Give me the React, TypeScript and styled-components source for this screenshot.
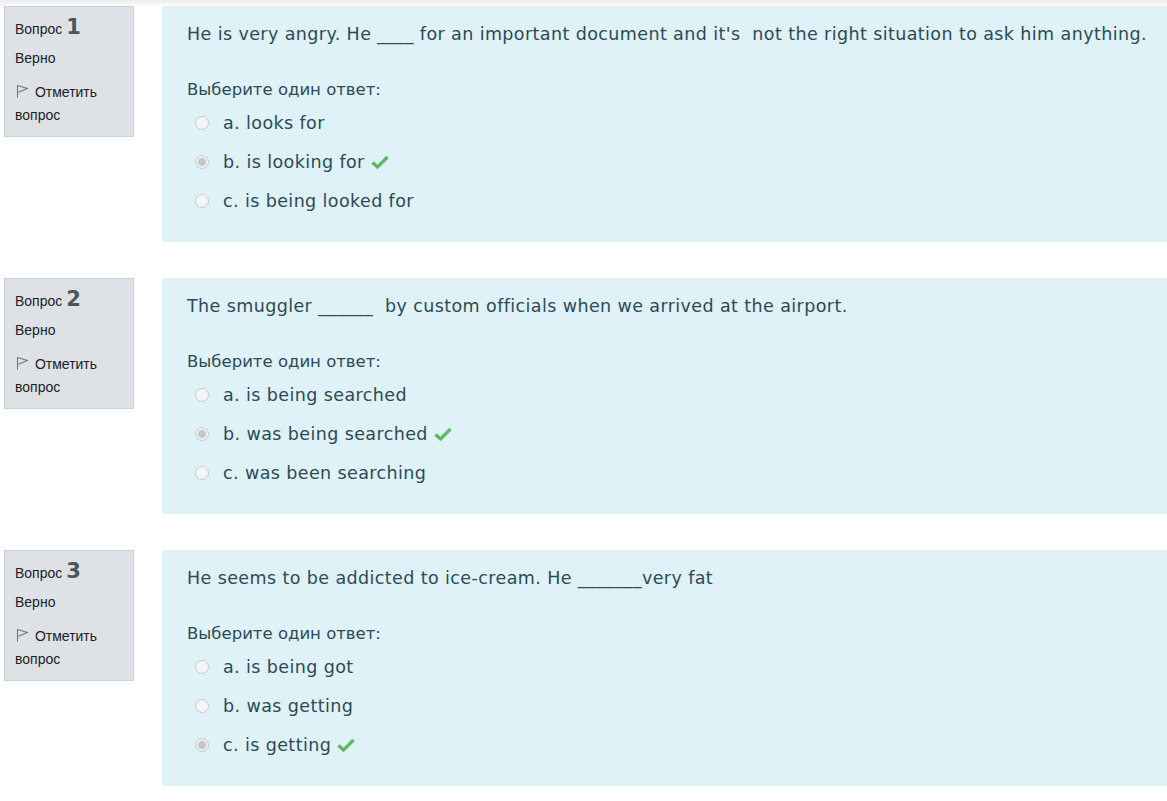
import React from 'react';
import styled, { createGlobalStyle } from 'styled-components';

const GlobalStyle = createGlobalStyle`
  html, body {
    margin: 0;
    padding: 0;
    background: #ffffff;
  }
  body {
    font-family: "Liberation Sans", Arial, sans-serif;
  }
`;

interface Option {
  label: string;
  checked?: boolean;
}

interface Question {
  num: number;
  text: string;
  options: Option[];
}

const questions: Question[] = [
  {
    num: 1,
    text: "He is very angry. He ____ for an important document and it's  not the right situation to ask him anything.",
    options: [
      { label: 'a. looks for' },
      { label: 'b. is looking for', checked: true },
      { label: 'c. is being looked for' },
    ],
  },
  {
    num: 2,
    text: 'The smuggler ______  by custom officials when we arrived at the airport.',
    options: [
      { label: 'a. is being searched' },
      { label: 'b. was being searched', checked: true },
      { label: 'c. was been searching' },
    ],
  },
  {
    num: 3,
    text: 'He seems to be addicted to ice-cream. He _______very fat',
    options: [
      { label: 'a. is being got' },
      { label: 'b. was getting' },
      { label: 'c. is getting', checked: true },
    ],
  },
];

const Flag = () => (
  <svg width="14" height="14" viewBox="0 0 14 14" fill="none">
    <path
      d="M2.5 13V1.5L12.5 4.5L4 8"
      stroke="#6a737b"
      strokeWidth="1.1"
      strokeLinejoin="round"
      strokeLinecap="round"
    />
  </svg>
);

const Check = () => (
  <svg width="18" height="14" viewBox="0 0 18 14">
    <path
      d="M1.5 7.5L6.5 12L16.5 2"
      stroke="#5cb85c"
      strokeWidth="3.2"
      fill="none"
      strokeLinejoin="miter"
    />
  </svg>
);

const App = () => {
  return (
    <>
      <GlobalStyle />
      <TopShadow />
      <Page>
        {questions.map((q) => (
          <Que key={q.num}>
            <Info>
              <QNo>
                Вопрос <Num>{q.num}</Num>
              </QNo>
              <State>Верно</State>
              <FlagLink>
                <Flag /> Отметить вопрос
              </FlagLink>
            </Info>
            <Formulation>
              <QText>{q.text}</QText>
              <Prompt>Выберите один ответ:</Prompt>
              <Answers>
                {q.options.map((o) => (
                  <Answer key={o.label}>
                    <Radio checked={o.checked} />
                    <span>{o.label}</span>
                    {o.checked && <Check />}
                  </Answer>
                ))}
              </Answers>
            </Formulation>
          </Que>
        ))}
      </Page>
    </>
  );
};

export default App;

const TopShadow = styled.div`
  position: fixed;
  top: 0;
  left: 0;
  right: 0;
  height: 6px;
  background: linear-gradient(#ececec, rgba(240, 240, 240, 0.2));
  pointer-events: none;
`;

const Page = styled.div`
  display: flex;
  flex-direction: column;
  gap: 36px;
  padding: 6px 0 0 4px;
`;

const Que = styled.div`
  display: flex;
  align-items: flex-start;
  gap: 28px;
`;

const Info = styled.div`
  box-sizing: border-box;
  width: 130px;
  height: 131px;
  flex-shrink: 0;
  background: #dee2e6;
  border: 1px solid #cad0d7;
  padding: 7px 10px;
  color: #1d2125;
  font-size: 14px;
`;

const QNo = styled.div`
  font-size: 14px;
  line-height: 26px;
  color: #1d2125;
`;

const Num = styled.span`
  font-family: "DejaVu Sans", sans-serif;
  font-size: 21px;
  font-weight: 700;
  color: #4d555c;
`;

const State = styled.div`
  margin-top: 6px;
  line-height: 20px;
`;

const FlagLink = styled.div`
  margin-top: 13px;
  line-height: 23px;
  color: #1d2125;

  svg {
    vertical-align: -1px;
    margin-right: 2px;
  }
`;

const Formulation = styled.div`
  box-sizing: border-box;
  flex: 1;
  height: 236px;
  background: #def2f8;
  padding: 16px 10px 0 25px;
  color: #2c4a57;
  font-family: "DejaVu Sans", "Noto Sans", sans-serif;
  font-size: 17.5px;
  letter-spacing: 0.4px;
`;

const QText = styled.div`
  line-height: 24px;
  white-space: pre-wrap;
`;

const Prompt = styled.div`
  margin-top: 32px;
  line-height: 24px;
  font-size: 16.5px;
  letter-spacing: 0;
`;

const Answers = styled.div`
  display: flex;
  flex-direction: column;
  gap: 15px;
  margin-top: 9px;
  padding-left: 8px;
`;

const Answer = styled.div`
  display: flex;
  align-items: center;
  gap: 14px;
  height: 24px;

  svg {
    margin-left: -8px;
  }
`;

const Radio = styled.span<{ checked?: boolean }>`
  box-sizing: border-box;
  width: 14px;
  height: 14px;
  border-radius: 50%;
  border: 1px solid #c6cacd;
  background: ${(p) =>
    p.checked
      ? 'radial-gradient(circle, #c4c6c8 0 3.5px, #eeeff0 4.5px)'
      : '#f3f5f6'};
  flex-shrink: 0;
`;
